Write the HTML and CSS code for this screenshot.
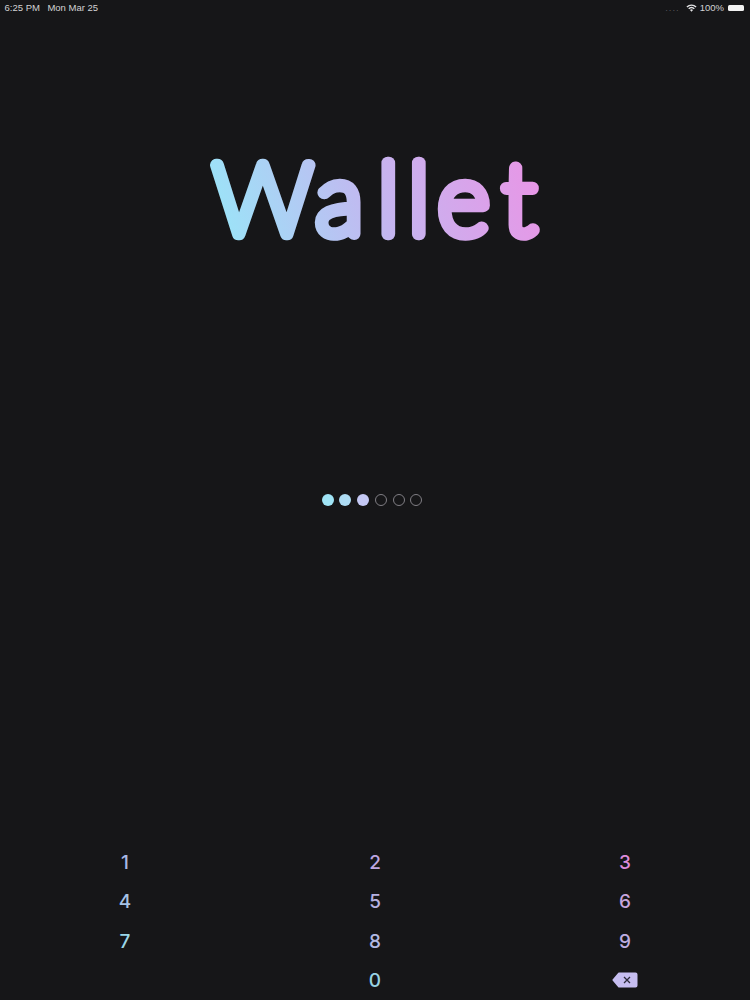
FILE: index.html
```html
<!DOCTYPE html>
<html lang="en">
<head>
<meta charset="utf-8">
<title>Wallet</title>
<link rel="stylesheet" href="styles.css">
</head>
<body>
<div class="screen">
  <header class="status">
    <div class="status-left"><span>6:25 PM</span><span>Mon Mar 25</span></div>
    <div class="status-right">
      <span class="signal">....</span>
      <svg class="wifi" viewBox="0 0 12 9" aria-hidden="true"><path d="M6 8.6 4.3 6.8a2.5 2.5 0 0 1 3.4 0zM3.4 5.9 2.3 4.8a5.4 5.4 0 0 1 7.4 0L8.600 5.900a3.900 3.900 0 0 0-5.200 0zM1.400 3.900.3 2.800a8.300 8.300 0 0 1 11.400 0l-1.100 1.100a6.800 6.800 0 0 0-9.200 0z"/></svg>
      <span>100%</span>
      <span class="battery"></span>
    </div>
  </header>
  <svg class="logo" viewBox="0 0 750 160" role="img" aria-label="Wallet">
    <defs>
      <linearGradient id="wg" gradientUnits="userSpaceOnUse" x1="225" y1="120" x2="530" y2="20">
        <stop offset="0" stop-color="#9be4f8"/>
        <stop offset=".5" stop-color="#c4b6f0"/>
        <stop offset="1" stop-color="#e896e6"/>
      </linearGradient>
    </defs>
    <text class="logo-text" x="381.500" y="106" dx="-2 -2 5 0 -1 4" text-anchor="middle" fill="url(#wg)" stroke="url(#wg)">Wallet</text>
  </svg>
  <div class="dots">
    <span class="dot on c1"></span><span class="dot on c2"></span><span class="dot on c3"></span>
    <span class="dot"></span><span class="dot"></span><span class="dot"></span>
  </div>
  <div class="keypad">
    <span class="key k1">1</span><span class="key k2">2</span><span class="key k3">3</span>
    <span class="key k4">4</span><span class="key k5">5</span><span class="key k6">6</span>
    <span class="key k7">7</span><span class="key k8">8</span><span class="key k9">9</span>
    <span class="key"></span><span class="key k0">0</span>
    <span class="key">
      <svg class="back" viewBox="0 0 26 16" aria-hidden="true">
        <path class="back-body" d="M7 .5h16.500a2 2 0 0 1 2 2v11a2 2 0 0 1-2 2H7a1 1 0 0 1-.7-.3L.6 8.500a.7.7 0 0 1 0-1L6.300.8A1 1 0 0 1 7 .5z"/>
        <path class="back-x" d="m12 5 6 6m0-6-6 6"/>
      </svg>
    </span>
  </div>
</div>
</body>
</html>
```
FILE: styles.css
```css
html, body { margin: 0; padding: 0; }
body { background: #161618; }
.screen {
  width: 750px;
  height: 1000px;
  display: flex;
  flex-direction: column;
  overflow: hidden;
  font-family: "Liberation Sans", Arial, sans-serif;
}
.status {
  flex: none;
  height: 15px;
  padding: 0 6px 0 4.500px;
  display: flex;
  justify-content: space-between;
  align-items: center;
  font-size: 9.500px;
  color: #d2d2d4;
}
.status-left { display: flex; gap: 7.500px; }
.status-right { display: flex; align-items: center; gap: 3px; }
.signal { color: #55555a; letter-spacing: 1px; margin-right: 3px; line-height: 8px; }
.wifi { width: 11px; height: 8px; fill: #e4e4e6; }
.battery {
  width: 16px;
  height: 6px;
  margin-left: 1px;
  background: #f2f2f2;
  border-radius: 1.500px;
}
.logo { display: block; flex: none; width: 750px; height: 160px; margin-top: 113px; }
.logo-text {
  font-family: Lato, "Liberation Sans", Arial, sans-serif;
  font-weight: 100;
  font-size: 99px;
  letter-spacing: 10px;
  stroke-width: 12.500px;
  stroke-linejoin: round;
}
.dots {
  flex: none;
  display: flex;
  justify-content: center;
  gap: 5.700px;
  margin-top: 206px;
  margin-left: -6px;
}
.dot {
  width: 12px;
  height: 12px;
  box-sizing: border-box;
  border-radius: 50%;
  border: 1.200px solid #807e84;
}
.dot.on { border: 0; }
.c1 { background: #a0e4f6; }
.c2 { background: #aedcf4; }
.c3 { background: #c4c8f4; }
.keypad {
  flex: none;
  margin-top: 336.700px;
  display: grid;
  grid-template-columns: repeat(3, 250px);
  grid-auto-rows: 39.500px;
  font-family: Inter, "Liberation Sans", sans-serif;
  font-size: 19px;
  font-weight: 500;
}
.key { display: flex; align-items: center; justify-content: center; }
.k1 { color: #a9b8e4; }
.k2 { color: #bea6e0; }
.k3 { color: #dd8cda; }
.k4 { color: #a6c2e6; }
.k5 { color: #b6b2e2; }
.k6 { color: #c8a6de; }
.k7 { color: #9ad6e8; }
.k8 { color: #b2bae2; }
.k9 { color: #beaee0; }
.k0 { color: #98d2e2; }
.back { width: 26px; height: 16px; margin-bottom: 1px; }
.back-body { fill: #c6bdf0; }
.back-x { fill: none; stroke: #2c2a3a; stroke-width: 1.300; }
```
